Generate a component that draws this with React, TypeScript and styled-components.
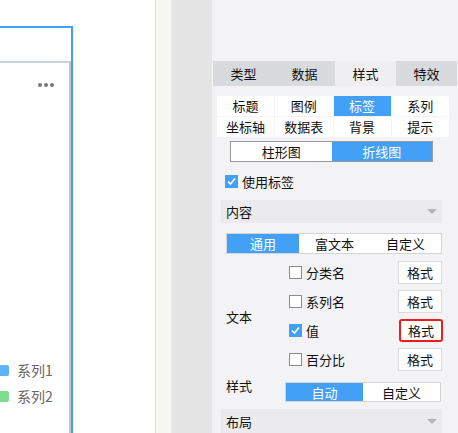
import styled, { createGlobalStyle } from "styled-components";

const GlobalStyle = createGlobalStyle`
  html, body {
    margin: 0;
    padding: 0;
    background: #ffffff;
    font-family: "Noto Sans CJK SC", "Noto Sans", sans-serif;
    font-size: 12px;
    color: #222;
  }
`;

const blue = "#42a0f6";

const Page = styled.div`
  display: flex;
  width: 458px;
  height: 433px;
  overflow: hidden;
`;

const Canvas = styled.div`
  position: relative;
  width: 155px;
  flex: none;
  background: #fff;
  overflow: hidden;
  border-right: 1px solid #e2e2d9;
`;

const Widget = styled.div`
  position: absolute;
  left: -120px;
  top: 26px;
  width: 189px;
  height: 460px;
  border: 2px solid ${blue};
  display: flex;
  flex-direction: column;
`;

const WidgetHeader = styled.div`
  height: 33px;
  flex: none;
`;

const ChartBox = styled.div`
  flex: 1;
  border-top: 2px solid #c6d2e0;
  border-right: 2px solid #c4c4c4;
  position: relative;
`;

const Dots = styled.div`
  position: absolute;
  right: 15px;
  top: 20px;
  display: flex;
  gap: 2px;
`;

const Dot = styled.span`
  width: 4px;
  height: 4px;
  border-radius: 50%;
  background: #777;
`;

const Legend = styled.div`
  position: absolute;
  left: 112px;
  top: 298px;
  display: flex;
  flex-direction: column;
  gap: 8px;
`;

const LegendItem = styled.div`
  display: flex;
  align-items: center;
  gap: 8px;
  font-size: 14px;
  color: #666;
  line-height: 18px;
`;

const Swatch = styled.span<{ $color: string }>`
  width: 15px;
  height: 11px;
  border-radius: 2px;
  background: ${({ $color }) => $color};
`;

const StripLight = styled.div`
  width: 15px;
  flex: none;
  background: #f7f7f4;
  border-right: 1px solid #ecece6;
`;

const StripGray = styled.div`
  width: 40px;
  flex: none;
  background: #e5e5e5;
`;

const Panel = styled.div`
  flex: 1;
  background: #f3f3f6;
  padding-top: 61px;
  display: flex;
  flex-direction: column;
`;

const MainTabs = styled.div`
  display: grid;
  grid-template-columns: repeat(4, 1fr);
  margin: 0 1px;
  height: 25px;
`;

const MainTab = styled.div<{ $active?: boolean }>`
  display: flex;
  align-items: center;
  justify-content: center;
  font-size: 13px;
  background: ${({ $active }) => ($active ? "#efeff2" : "#d9dadd")};
  color: #111;
`;

const SubTabs = styled.div`
  display: grid;
  grid-template-columns: repeat(4, 1fr);
  gap: 1px;
  margin: 10px 9px 0 5px;
`;

const SubTab = styled.div<{ $active?: boolean }>`
  height: 20px;
  display: flex;
  align-items: center;
  justify-content: center;
  font-size: 13px;
  background: ${({ $active }) => ($active ? blue : "#fff")};
  color: ${({ $active }) => ($active ? "#fff" : "#111")};
`;

const Segmented = styled.div<{ $border: string }>`
  display: flex;
  border: 1px solid ${({ $border }) => $border};
  background: #fff;
`;

const Segment = styled.div<{ $active?: boolean; $width?: number }>`
  flex: ${({ $width }) => ($width ? `0 0 ${$width}px` : "1")};
  display: flex;
  align-items: center;
  justify-content: center;
  font-size: 13px;
  background: ${({ $active }) => ($active ? blue : "#fff")};
  color: ${({ $active }) => ($active ? "#fff" : "#111")};
`;

const ChartToggle = styled(Segmented)`
  margin: 4px 25px 0 18px;
  height: 19px;
`;

const CheckRow = styled.label`
  display: flex;
  align-items: center;
  gap: 4px;
  font-size: 13px;
  color: #111;
`;

const UseLabelRow = styled(CheckRow)`
  margin: 13px 0 0 13px;
  height: 14px;
`;

const Box = styled.span<{ $checked?: boolean }>`
  width: 13px;
  height: 13px;
  box-sizing: border-box;
  flex: none;
  display: flex;
  align-items: center;
  justify-content: center;
  background: ${({ $checked }) => ($checked ? blue : "#fff")};
  border: 1px solid ${({ $checked }) => ($checked ? blue : "#8c8c8c")};
`;

const SectionHeader = styled.div<{ $top: number }>`
  margin: ${({ $top }) => $top}px 16px 0 9px;
  height: 24px;
  background: #ebebed;
  display: flex;
  align-items: center;
  justify-content: space-between;
  padding: 0 5px;
  font-size: 13px;
  color: #111;
`;

const Caret = styled.span`
  width: 0;
  height: 0;
  border-left: 5px solid transparent;
  border-right: 5px solid transparent;
  border-top: 5px solid #b4b4b8;
`;

const ContentTabs = styled(Segmented)`
  margin: 10px 16px 0 14px;
  height: 19px;
`;

const TextBlock = styled.div`
  display: flex;
  margin: 7px 16px 0 14px;
`;

const FieldLabel = styled.div`
  width: 63px;
  flex: none;
  display: flex;
  align-items: center;
  font-size: 13px;
  color: #111;
`;

const Options = styled.div`
  flex: 1;
  display: flex;
  flex-direction: column;
  gap: 6px;
`;

const OptionRow = styled.div`
  display: flex;
  align-items: center;
  justify-content: space-between;
  height: 23px;
`;

const FormatButton = styled.button<{ $highlight?: boolean }>`
  width: 44px;
  height: 23px;
  box-sizing: border-box;
  padding: 0;
  font-family: inherit;
  font-size: 13px;
  color: #111;
  background: #fff;
  border: ${({ $highlight }) => ($highlight ? "2px solid #ee1c1c" : "1px solid #dcdcdc")};
  border-radius: ${({ $highlight }) => ($highlight ? "3px" : "0")};
  margin-right: ${({ $highlight }) => ($highlight ? "-1px" : "0")};
`;

const StyleRow = styled.div`
  display: flex;
  margin: 11px 17px 0 14px;
  height: 20px;
`;

const StyleLabel = styled(FieldLabel)`
  width: 59px;
  align-items: flex-start;
  margin-top: -6px;
`;

const StyleToggle = styled(Segmented)`
  flex: 1;
`;

function Check({ checked }: { checked?: boolean }) {
  return (
    <Box $checked={checked}>
      {checked && (
        <svg width="11" height="11" viewBox="0 0 11 11">
          <path d="M2 5.5 L4.5 8 L9 2.5" fill="none" stroke="#fff" strokeWidth="1.6" />
        </svg>
      )}
    </Box>
  );
}

const options = [
  { name: "分类名", checked: false },
  { name: "系列名", checked: false },
  { name: "值", checked: true, highlight: true },
  { name: "百分比", checked: false },
];

export default function App() {
  return (
    <Page>
      <GlobalStyle />
      <Canvas>
        <Widget>
          <WidgetHeader />
          <ChartBox>
            <Dots>
              <Dot />
              <Dot />
              <Dot />
            </Dots>
            <Legend>
              <LegendItem>
                <Swatch $color="#5fb2f4" />
                系列1
              </LegendItem>
              <LegendItem>
                <Swatch $color="#80dc8e" />
                系列2
              </LegendItem>
            </Legend>
          </ChartBox>
        </Widget>
      </Canvas>
      <StripLight />
      <StripGray />
      <Panel>
        <MainTabs>
          <MainTab>类型</MainTab>
          <MainTab>数据</MainTab>
          <MainTab $active>样式</MainTab>
          <MainTab>特效</MainTab>
        </MainTabs>
        <SubTabs>
          {["标题", "图例", "标签", "系列", "坐标轴", "数据表", "背景", "提示"].map((t) => (
            <SubTab key={t} $active={t === "标签"}>
              {t}
            </SubTab>
          ))}
        </SubTabs>
        <ChartToggle $border="#9a9a9a">
          <Segment>柱形图</Segment>
          <Segment $active>折线图</Segment>
        </ChartToggle>
        <UseLabelRow>
          <Check checked />
          使用标签
        </UseLabelRow>
        <SectionHeader $top={11}>
          内容
          <Caret />
        </SectionHeader>
        <ContentTabs $border="#d4d4d8">
          <Segment $active $width={72}>通用</Segment>
          <Segment>富文本</Segment>
          <Segment>自定义</Segment>
        </ContentTabs>
        <TextBlock>
          <FieldLabel>文本</FieldLabel>
          <Options>
            {options.map((o) => (
              <OptionRow key={o.name}>
                <CheckRow>
                  <Check checked={o.checked} />
                  {o.name}
                </CheckRow>
                <FormatButton $highlight={o.highlight}>格式</FormatButton>
              </OptionRow>
            ))}
          </Options>
        </TextBlock>
        <StyleRow>
          <StyleLabel>样式</StyleLabel>
          <StyleToggle $border="#d4d4d8">
            <Segment $active $width={77}>自动</Segment>
            <Segment>自定义</Segment>
          </StyleToggle>
        </StyleRow>
        <SectionHeader $top={7}>
          布局
          <Caret />
        </SectionHeader>
      </Panel>
    </Page>
  );
}
